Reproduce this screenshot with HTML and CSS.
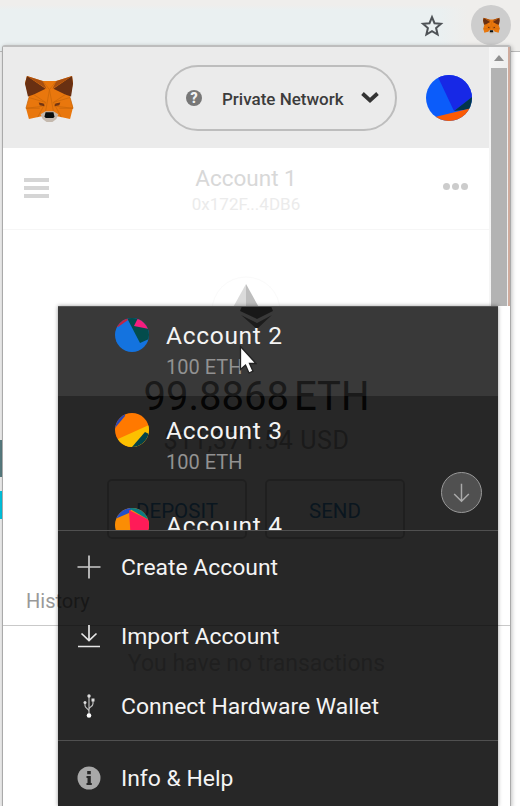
FILE: index.html
```
<!DOCTYPE html>
<html lang="en">
<head>
<meta charset="utf-8">
<title>Wallet</title>
<link rel="stylesheet" href="styles.css">
</head>
<body>
<svg class="defs" width="0" height="0" aria-hidden="true">
  <symbol id="fox" viewBox="0 0 50 48">
    <path d="M2 1 18 6h14L48 1l1 7-3 15 3 10-3 12-13-3-4 4h-8l-4-4-13 3L1 34l3-11L0 8z" fill="#e9770d"/>
    <path d="M2 1 21 14 9 20 3 22 0 9zM48 1 29 14l12 6 6 2 2-13z" fill="#693012"/>
    <path d="M2 1 18 6l4 8zM48 1 32 6l-4 8z" fill="#a84f10"/>
    <path d="M18 6 25 15 32 6M25 15 21 37M25 15l4 22M4 23l17 5-8 15M46 23l-17 5 8 15M1 34l17-2M49 34l-17-2M9 20l12 8M41 20l-12 8M4 23 1 34l14 0M46 23l3 11H35" fill="none" stroke="#cb680a" stroke-width=".8"/>
    <path d="M14 28l5 1 1 3-5-1zM36 28l-5 1-1 3 5-1z" fill="#713513"/>
    <path d="M16 40l5-3h8l5 3-2 5-4 3h-6l-4-3z" fill="#c4b9ae"/>
    <path d="M21 38h8l1 4-1 2h-8l-1-2z" fill="#080e0e"/>
  </symbol>
</svg>

<div class="page-edge"><i class="edge-slate"></i><i class="edge-cyan"></i></div>

<header class="toolbar">
  <svg class="star" viewBox="0 0 24 24"><path d="M12 3.200l2.500 6 6.500.6-4.900 4.300 1.500 6.400-5.600-3.400-5.600 3.400 1.500-6.400L3 9.800l6.500-.6z" fill="none" stroke="#4e5256" stroke-width="2"/></svg>
  <span class="extension"><svg viewBox="0 0 50 48"><use href="#fox"/></svg></span>
</header>

<main class="popup">
  <section class="upper">
    <div class="upper-content">
      <div class="app-header">
        <svg class="logo" viewBox="0 0 50 48" preserveAspectRatio="none"><use href="#fox"/></svg>
        <div class="network">
          <span class="help">?</span>
          <span class="network-name">Private Network</span>
          <svg class="chevron" viewBox="0 0 18 12"><path d="M1.500 1.500l7.500 7 7.500-7" fill="none" stroke="#333" stroke-width="3.800"/></svg>
        </div>
        <svg class="avatar" viewBox="0 0 46 46"><clipPath id="c0"><circle cx="23" cy="23" r="23"/></clipPath><g clip-path="url(#c0)"><path d="M0 0h46v46H0z" fill="#0b5cfa"/><path d="M11 0h35v22L28 36z" fill="#1728e6"/><path d="M46 22 28 36l18-2z" fill="#03354a"/><path d="M9 42 46 33v13H9z" fill="#fb5b05"/></g></svg>
      </div>
      <div class="account-bar">
        <div class="burger"><i></i><i></i><i></i></div>
        <div class="account-title"><div class="account-name">Account 1</div><div class="address">0x172F...4DB6</div></div>
        <div class="dots"><i></i><i></i><i></i></div>
      </div>
      <div class="eth-top"><svg viewBox="0 0 70 31"><circle cx="35" cy="36" r="34" fill="none" stroke="#fafafa"/><path d="M35 9v27H20z" fill="#dadada"/><path d="M35 9v27h15z" fill="#bdbdbd"/></svg></div>
    </div>
    <div class="scrollbar"><i class="arrow"></i><i class="thumb"></i></div>
  </section>

  <section class="lower">
    <svg class="eth-bottom" viewBox="0 0 34 24"><path d="M2 0h29l2 5-16 8L0 5z" fill="#181818"/><path d="M1 9l16 8 15-8-15 14z" fill="#333"/></svg>
    <div class="balance">99.8868 ETH</div>
    <div class="fiat">$11,371.54 USD</div>
    <div class="buttons"><span>DEPOSIT</span><span>SEND</span></div>
    <div class="history">History</div>
    <div class="empty">You have no transactions</div>
  </section>
</main>

<nav class="menu">
  <div class="accounts">
    <div class="account selected">
      <svg class="identicon" viewBox="0 0 34 34"><clipPath id="c1"><circle cx="17" cy="17" r="17"/></clipPath><g clip-path="url(#c1)"><path d="M0 0h34v34H0z" fill="#1473df"/><path d="M12 0h22v21l-9 4z" fill="#034c4c"/><path d="M19 8 23 0h11v11z" fill="#f51d7e"/><path d="M0 9V0h12l1 2L3 9z" fill="#c12442"/></g></svg>
      <div><div class="name">Account 2</div><div class="amount">100 ETH</div></div>
    </div>
    <div class="account">
      <svg class="identicon" viewBox="0 0 34 34"><g clip-path="url(#c1)"><path d="M0 0h34v34H0z" fill="#ff7900"/><path d="M0 0h10v3L0 15z" fill="#2947b8"/><path d="M3 26 34 12v22H0z" fill="#fcc000"/><path d="M30 19 17 34h17V21z" fill="#034248"/></g></svg>
      <div><div class="name">Account 3</div><div class="amount">100 ETH</div></div>
    </div>
    <div class="account">
      <svg class="identicon" viewBox="0 0 34 34"><g clip-path="url(#c1)"><path d="M0 0h34v34H0z" fill="#fb8d04"/><path d="M0 0h17l-3 5L0 11z" fill="#2450c8"/><path d="M14 2 34 12v22H16z" fill="#ff1b58"/><path d="M15 0h19v12L15 1z" fill="#0b7b83"/></g></svg>
      <div><div class="name">Account 4</div><div class="amount">100 ETH</div></div>
    </div>
  </div>
  <div class="actions">
    <div class="action"><svg viewBox="0 0 24 24"><path d="M12 .5v23M.5 12h23" stroke="#ccc" stroke-width="1.700"/></svg><span>Create Account</span></div>
    <div class="action"><svg viewBox="0 0 24 24"><path d="M12 1v15M4.500 9.500 12 16.500l7.500-7M1 22.500h22" fill="none" stroke="#e6e6e6" stroke-width="1.700"/></svg><span>Import Account</span></div>
    <div class="action"><svg viewBox="0 0 24 24"><path d="M12 2v20M12 17.500c0-3-4-3-4-6V8.500M12 15.500c0-3 4-2.500 4-6V6" fill="none" stroke="#bbb" stroke-width="1.200"/><circle cx="12" cy="21.500" r="2.300" fill="#fff"/><circle cx="12" cy="2" r="1.700" fill="#ddd"/><circle cx="8" cy="8.500" r="1.500" fill="#ddd"/><path d="M14.500 4.500h3v3h-3z" fill="#ddd"/></svg><span>Connect Hardware Wallet</span></div>
  </div>
  <div class="footer">
    <div class="action"><svg viewBox="0 0 24 24"><circle cx="12" cy="12" r="11.500" fill="#a8a8a8"/><path d="M10.200 5h3.600v3.200h-3.600zM9.500 10h4.300v7h1v2H9.500v-2h1v-5h-1z" fill="#272727"/></svg><span>Info &amp; Help</span></div>
  </div>
  <div class="scroll-down"><svg viewBox="0 0 40 40"><path d="M20 11v18M12.500 21.500 20 29l7.500-7.500" fill="none" stroke="#aaa" stroke-width="1.500"/></svg></div>
</nav>
<svg class="cursor" viewBox="0 0 18 30"><path d="M1.500 1.500v23l5-4.500 3.500 8 4-1.800-3.500-7.700H17z" fill="#fff" stroke="#222" stroke-width="1.300"/></svg>
</body>
</html>
```
FILE: styles.css
```
* { box-sizing: border-box; }
body {
  margin: 0;
  width: 520px;
  height: 806px;
  overflow: hidden;
  position: relative;
  background: #fff;
  font-family: Roboto, "Liberation Sans", sans-serif;
}
svg { display: block; flex: none; }
.defs { position: absolute; }

.toolbar {
  height: 52px;
  background: linear-gradient(#efeeec 0, #efeeec 5px, transparent 10px), linear-gradient(90deg, #eaf0f1 440px, #efeeec 468px);
  border-bottom: 1px solid #bbb;
  display: flex;
  justify-content: flex-end;
  padding: 5px 9px 0 0;
}
.star { width: 24px; height: 24px; margin: 9px 27px 0 0; }
.extension {
  width: 40px;
  height: 40px;
  border-radius: 50%;
  background: #cdcdcd;
  display: flex;
  align-items: center;
  justify-content: center;
}
.extension svg { width: 17px; height: 17px; }

.page-edge { position: absolute; left: 0; top: 52px; width: 2px; height: 754px; background: #eee; padding-top: 388px; }
.page-edge i { display: block; }
.edge-slate { height: 37px; background: #587c80; }
.edge-cyan { height: 28px; margin-top: 14px; background: #00c4df; }

.popup {
  position: absolute;
  left: 2px;
  top: 45px;
  width: 509px;
  height: 762px;
  background: #fff;
  border: 1px solid #aaa;
  border-top: 2px solid #bdbdbd;
  border-radius: 3px 3px 0 0;
  box-shadow: 1px 1px 4px rgba(0, 0, 0, .25);
}
.upper { display: flex; height: 259px; border-right: 2px solid #cfab9d; }
.upper-content { width: 486px; }
.app-header { height: 101px; background: #ebebeb; display: flex; align-items: center; padding: 1px 17px 0 22px; }
.logo { width: 49px; height: 47px; }
.network {
  width: 232px;
  height: 66px;
  margin-left: 91px;
  border: 2px solid #bdbdbd;
  border-radius: 33px;
  display: flex;
  align-items: center;
  padding: 0 16px 0 19px;
}
.help {
  width: 16px;
  height: 16px;
  border-radius: 50%;
  background: #777;
  color: #f2f2f2;
  font-size: 14px;
  font-weight: 900;
  line-height: 16px;
  text-align: center;
}
.network-name { margin-left: 20px; padding-top: 1px; width: 123px; font-size: 17px; font-weight: 500; color: #3c3c3c; white-space: nowrap; }
.chevron { width: 18px; height: 12px; margin-left: auto; }
.avatar { width: 46px; height: 46px; margin-left: auto; }
.account-bar { height: 82px; display: flex; padding: 0 21px; justify-content: space-between; border-bottom: 1px solid #f6f6f6; }
.burger { width: 25px; padding-top: 30px; display: grid; gap: 4px; align-content: start; }
.burger i { height: 4px; background: #d5d5d5; }
.account-title { text-align: center; padding-top: 16px; }
.account-name { font-size: 22.5px; line-height: 28px; color: #d8d8d8; }
.address { font-size: 17px; line-height: 24px; color: #ebebeb; }
.dots { width: 25px; display: flex; gap: 2px; padding-top: 35px; }
.dots i { width: 7px; height: 7px; border-radius: 50%; background: #ccc; }
.eth-top { height: 76px; padding: 45px 0 0 208px; }
.eth-top svg { width: 70px; height: 31px; }
.scrollbar { flex: 1; padding: 8px 1px 0 2px; background: linear-gradient(90deg, #f5f5f5, #eee); }
.arrow { display: block; width: 0; height: 0; margin: 0 auto; border: 5px solid transparent; border-top: 0; border-bottom: 6px solid #909090; }
.thumb { display: block; height: 238px; margin-top: 7px; background: #b3b3b3; }

.lower { height: 500px; }
.eth-bottom { width: 34px; height: 24px; margin-left: 237px; }
.balance { margin-top: 44px; height: 44px; line-height: 46px; font-size: 40px; word-spacing: -5px; text-align: center; color: #222; white-space: nowrap; }
.fiat { margin-top: 8px; height: 28px; line-height: 29px; font-size: 25px; letter-spacing: .6px; text-align: center; color: #aaa; }
.buttons { display: flex; gap: 18px; margin: 25px 0 0 104px; }
.buttons span { width: 140px; height: 60px; line-height: 60px; border: 2px solid #ccc; border-radius: 5px; text-align: center; color: #4590c8; font-size: 20.500px; }
.history { height: 87px; padding: 51px 0 0 23px; font-size: 20px; line-height: 22px; color: #999; border-bottom: 1px solid #c9c9c9; }
.empty { margin-top: 24px; font-size: 23px; line-height: 28px; text-align: center; color: #ccc; }

.menu {
  position: absolute;
  left: 58px;
  top: 306px;
  width: 440px;
  height: 500px;
  background: rgba(0, 0, 0, .848);
  border-top: 1px solid #555;
  box-shadow: 0 0 4px rgba(0, 0, 0, .4);
  color: #f4f4f4;
}
.accounts { height: 224px; overflow: hidden; border-bottom: 1px solid #505050; }
.account { height: 95px; display: flex; padding: 17px 0 0 57px; }
.account.selected { height: 89px; padding-top: 11px; background: rgba(255, 255, 255, .085); }
.identicon { width: 34px; height: 34px; margin-right: 17px; }
.name { font-size: 24.5px; line-height: 36px; letter-spacing: .7px; white-space: nowrap; }
.amount { padding-top: 1px; font-size: 20px; line-height: 24px; color: #929292; }
.actions { height: 210px; border-bottom: 1px solid #505050; padding-top: 1px; }
.action { height: 69.5px; display: flex; align-items: center; padding-left: 19px; font-size: 22.9px; white-space: nowrap; }
.action span { padding-top: 1px; }
.action svg { width: 24px; height: 24px; margin-right: 20px; }
.footer { padding-top: 2px; }
.scroll-down {
  position: absolute;
  left: 383px;
  top: 165px;
  width: 41px;
  height: 41px;
  border: 1.5px solid #999;
  border-radius: 50%;
  background: #505050;
}
.cursor { position: absolute; left: 239px; top: 345px; width: 18px; height: 30px; }
```
